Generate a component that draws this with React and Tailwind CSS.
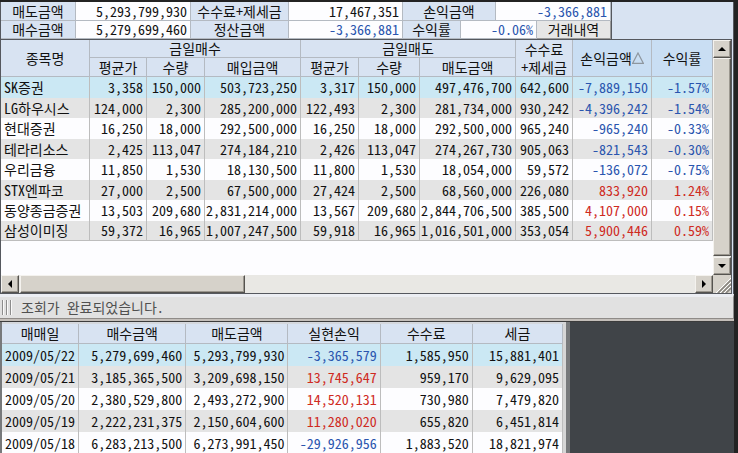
import React from "react";

const SUMMARY_CELL = "flex items-center border-r border-b border-[#b4bac2]";

const holdings = [
  ["SK증권", "3,358", "150,000", "503,723,250", "3,317", "150,000", "497,476,700", "642,600", "-7,889,150", "-1.57%"],
  ["LG하우시스", "124,000", "2,300", "285,200,000", "122,493", "2,300", "281,734,000", "930,242", "-4,396,242", "-1.54%"],
  ["현대증권", "16,250", "18,000", "292,500,000", "16,250", "18,000", "292,500,000", "965,240", "-965,240", "-0.33%"],
  ["테라리소스", "2,425", "113,047", "274,184,210", "2,426", "113,047", "274,267,730", "905,063", "-821,543", "-0.30%"],
  ["우리금융", "11,850", "1,530", "18,130,500", "11,800", "1,530", "18,054,000", "59,572", "-136,072", "-0.75%"],
  ["STX엔파코", "27,000", "2,500", "67,500,000", "27,424", "2,500", "68,560,000", "226,080", "833,920", "1.24%"],
  ["동양종금증권", "13,503", "209,680", "2,831,214,000", "13,567", "209,680", "2,844,706,500", "385,500", "4,107,000", "0.15%"],
  ["삼성이미징", "59,372", "16,965", "1,007,247,500", "59,918", "16,965", "1,016,501,000", "353,054", "5,900,446", "0.59%"],
];

const daily = [
  ["2009/05/22", "5,279,699,460", "5,293,799,930", "-3,365,579", "1,585,950", "15,881,401"],
  ["2009/05/21", "3,185,365,500", "3,209,698,150", "13,745,647", "959,170", "9,629,095"],
  ["2009/05/20", "2,380,529,800", "2,493,272,900", "14,520,131", "730,980", "7,479,820"],
  ["2009/05/19", "2,222,231,375", "2,150,604,600", "11,280,020", "655,820", "6,451,814"],
  ["2009/05/18", "6,283,213,500", "6,273,991,450", "-29,926,956", "1,883,520", "18,821,974"],
];

const signColor = (v) => (v.startsWith("-") ? "text-[#2a55ae]" : "text-[#cf2a1e]");

const rowColor = (i) => (i === 0 ? "bg-[#cbe8f4]" : i % 2 ? "bg-[#e4e4e4]" : "bg-[#fdfdff]");

function Label({ children, className = "" }) {
  return <div className={`${SUMMARY_CELL} justify-center bg-[#d8e3f2] ${className}`}>{children}</div>;
}

function Value({ children, className = "" }) {
  return <div className={`${SUMMARY_CELL} justify-end bg-[#fdfdff] pr-[3px] ${className}`}>{children}</div>;
}

function Summary() {
  return (
    <div className="flex bg-[#d8e3f2]">
      <div className="grid grid-cols-[75px_115px_98px_114px_58px_35px_41px_74px] grid-rows-[19px_18px] border-r border-[#55585e]">
        <Label>매도금액</Label>
        <Value>5,293,799,930</Value>
        <Label>수수료+제세금</Label>
        <Value>17,467,351</Value>
        <Label className="col-span-2">손익금액</Label>
        <Value className="col-span-2 text-[#2a55ae]">-3,366,881</Value>
        <Label>매수금액</Label>
        <Value>5,279,699,460</Value>
        <Label>정산금액</Label>
        <Value className="text-[#2a55ae]">-3,366,881</Value>
        <Label>수익률</Label>
        <Value className="col-span-2 text-[#2a55ae]">-0.06%</Value>
        <button type="button" className="flex items-center justify-center border-r border-b border-[#9a9a9a] bg-[#e6e6e6]">
          거래내역
        </button>
      </div>
    </div>
  );
}

const TH = "border-r border-b border-[#b4bac2] p-0 text-center font-normal";

function Holdings() {
  return (
    <table className="w-full table-fixed border-separate border-spacing-0">
      <colgroup>
        <col className="w-[89px]" />
        <col className="w-[57px]" />
        <col className="w-[58px]" />
        <col className="w-[96px]" />
        <col className="w-[58px]" />
        <col className="w-[61px]" />
        <col className="w-[96px]" />
        <col className="w-[57px]" />
        <col className="w-[79px]" />
        <col className="w-[61px]" />
      </colgroup>
      <thead className="bg-[#d8e3f2]">
        <tr className="h-[18px]">
          <th rowSpan={2} className={TH}>종목명</th>
          <th colSpan={3} className={TH}>금일매수</th>
          <th colSpan={3} className={TH}>금일매도</th>
          <th rowSpan={2} className={`${TH} leading-[18px]`}>수수료<br />+제세금</th>
          <th rowSpan={2} className={`${TH} bg-[#c9def3]`}>
            <button type="button" className="inline-flex items-center">
              손익금액
              <svg width="12" height="12" viewBox="0 0 12 12" className="shrink-0" aria-hidden="true">
                <path d="M6 1 L11.3 11.3 H0.7 Z" fill="none" stroke="#8e969e" strokeWidth="1.2" />
              </svg>
            </button>
          </th>
          <th rowSpan={2} className={`${TH} bg-[#c9def3]`}>수익률</th>
        </tr>
        <tr className="h-[19px]">
          <th className={TH}>평균가</th>
          <th className={TH}>수량</th>
          <th className={TH}>매입금액</th>
          <th className={TH}>평균가</th>
          <th className={TH}>수량</th>
          <th className={TH}>매도금액</th>
        </tr>
      </thead>
      <tbody>
        {holdings.map((row, i) => (
          <tr key={row[0]} className={`odd:h-[21px] even:h-[20px] ${rowColor(i)}`}>
            {row.map((v, j) => (
              <td
                key={j}
                className={`border-r border-[#bdbdbd] py-0 whitespace-nowrap ${i === holdings.length - 1 ? "border-b" : ""} ${
                  j === 0 ? "pr-0 pl-[3px] text-left" : "pr-[3px] pl-0 text-right"
                } ${j > 7 ? signColor(v) : ""}`}
              >
                {v}
              </td>
            ))}
          </tr>
        ))}
      </tbody>
    </table>
  );
}

const RAISED =
  "border border-t-[#f4f2ee] border-l-[#f4f2ee] border-r-[#55534f] border-b-[#55534f] bg-[#d6d2ca] shadow-[inset_-1px_-1px_0_#9b978f]";
const TRACK = "bg-[#e9e8e4]";

const ARROWS = {
  up: "M0 6 L4 2 L8 6 Z",
  down: "M0 2 L4 6 L8 2 Z",
  left: "M6 0 L2 4 L6 8 Z",
  right: "M2 0 L6 4 L2 8 Z",
};

function ArrowButton({ direction, label }) {
  return (
    <button type="button" aria-label={label} className={`flex h-[18px] w-[18px] shrink-0 items-center justify-center ${RAISED}`}>
      <svg width="8" height="8" viewBox="0 0 8 8" aria-hidden="true">
        <path d={ARROWS[direction]} fill="#000" />
      </svg>
    </button>
  );
}

function DailyTable() {
  return (
    <table className="w-full table-fixed border-separate border-spacing-0">
      <colgroup>
        <col className="w-[77px]" />
        <col className="w-[107px]" />
        <col className="w-[102px]" />
        <col className="w-[92px]" />
        <col className="w-[92px]" />
        <col className="w-[90px]" />
      </colgroup>
      <thead className="bg-[#d8e3f2]">
        <tr className="h-5">
          {["매매일", "매수금액", "매도금액", "실현손익", "수수료", "세금"].map((h) => (
            <th key={h} className={TH}>{h}</th>
          ))}
        </tr>
      </thead>
      <tbody>
        {daily.map((row, i) => (
          <tr key={row[0]} className={`h-[22px] ${rowColor(i)}`}>
            {row.map((v, j) => (
              <td
                key={j}
                className={`border-r border-[#bdbdbd] py-0 whitespace-nowrap ${
                  j === 0 ? "pr-0 pl-[3px] text-left" : "pr-[3px] pl-0 text-right"
                } ${j === 3 ? signColor(v) : ""}`}
              >
                {v}
              </td>
            ))}
          </tr>
        ))}
      </tbody>
    </table>
  );
}

export default function App() {
  return (
    <div className="flex h-screen flex-col overflow-hidden bg-[#404448] font-['Noto_Sans_Mono_CJK_KR','Noto_Sans_CJK_KR',monospace] text-sm leading-[17px] text-[#111111]">
      <div className="shrink-0 border-t-2 border-r-4 border-[#232323]">
        <div className="border-r border-l border-[#55585e] bg-[#d8e3f2] pr-px">
          <Summary />
          <div className="flex border-y border-r border-[#55585e] bg-[#fdfdff]">
            <div className="flex min-w-0 grow flex-col">
              <Holdings />
              <div className={`mt-[34px] flex ${TRACK}`}>
                <ArrowButton direction="left" label="왼쪽으로 스크롤" />
                <div className={`ml-px w-[225px] ${RAISED}`} />
                <div className="grow" />
                <ArrowButton direction="right" label="오른쪽으로 스크롤" />
              </div>
            </div>
            <div className={`flex w-[18px] shrink-0 flex-col ${TRACK}`}>
              <ArrowButton direction="up" label="위로 스크롤" />
              <div className={`grow ${RAISED}`} />
              <div className="h-px" />
              <ArrowButton direction="down" label="아래로 스크롤" />
              <svg width="18" height="18" viewBox="0 0 18 18" className="bg-[#d6d2ca]" aria-hidden="true">
                <path d="M5 18 L18 5 M9 18 L18 9 M13 18 L18 13" stroke="#8a8780" strokeWidth="1.6" />
                <path d="M3 18 L18 3 M7 18 L18 7 M11 18 L18 11" stroke="#fff" strokeWidth="1" />
              </svg>
            </div>
          </div>
        </div>
        <div className="border-t-[3px] border-r border-t-[#eceef3] border-r-[#8d8d8d] bg-[#e1e1e1]">
          <div role="status" className="flex h-[21px] items-center pl-[2px] text-[#505050]">
            <svg width="10" height="15" viewBox="0 0 10 15" className="mr-[9px]" aria-hidden="true">
              <path d="M0.5 0V15M4.5 0V15M8.5 0V15" stroke="#8d8d8d" />
              <path d="M1.5 0V15M5.5 0V15M9.5 0V15" stroke="#fafafa" />
            </svg>
            조회가 완료되었습니다.
          </div>
        </div>
        <div className="h-1 border-t border-b border-t-[#8f8b88] border-b-[#3c3c3c] bg-[#c4bfba]" />
      </div>
      <div className="flex min-h-0 grow border-r-4 border-[#232323]">
        <div className="flex w-[570px] border-r-4 border-l-2 border-r-[#77797b] border-l-[#77797b] bg-[#d6d6d6] pr-[3px]">
          <div className="grow border-t-2 border-[#d5d8dd]">
            <DailyTable />
          </div>
        </div>
      </div>
    </div>
  );
}
